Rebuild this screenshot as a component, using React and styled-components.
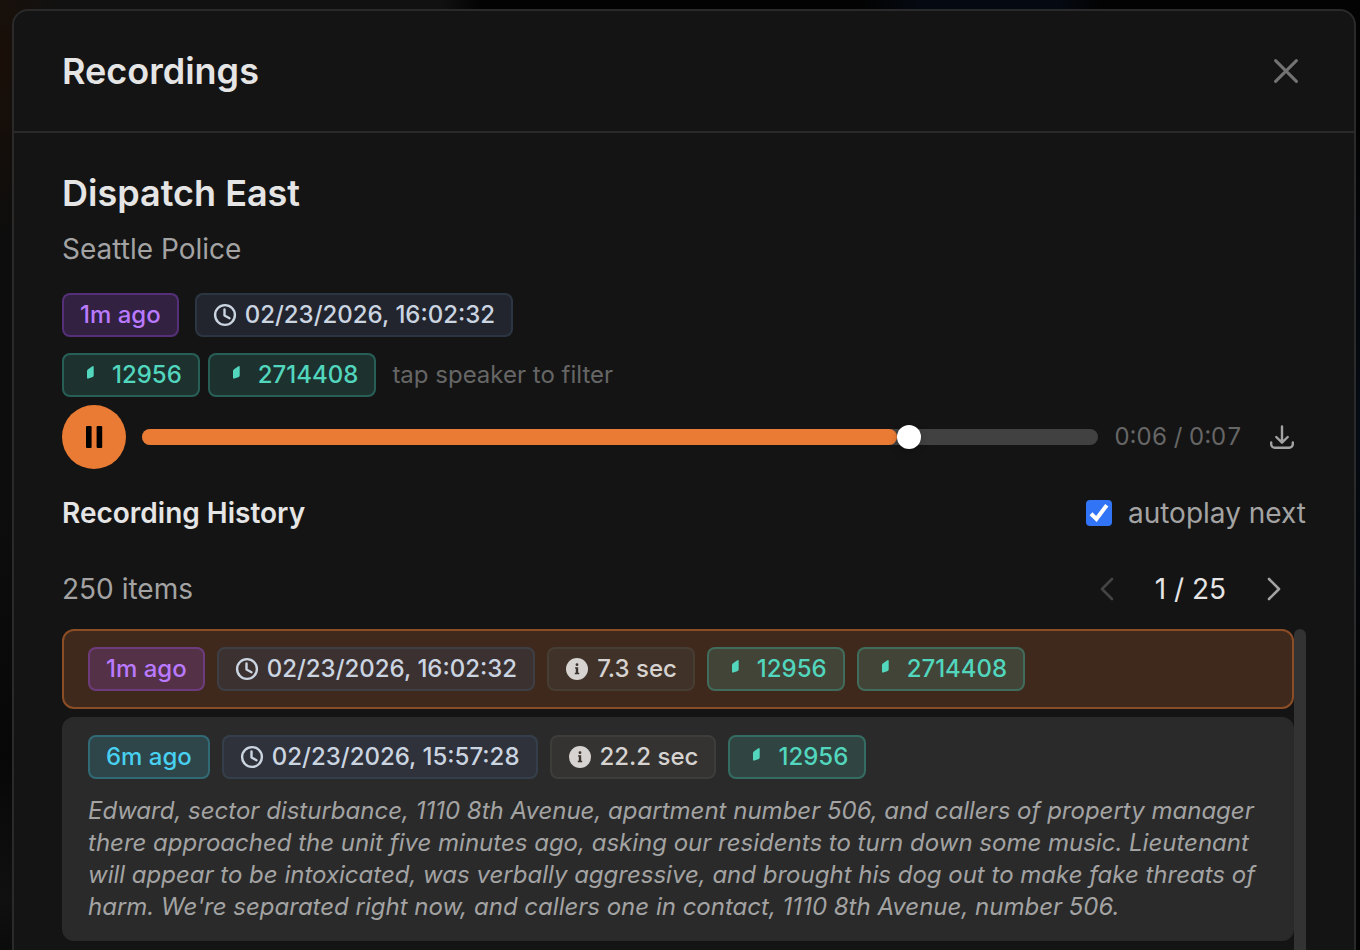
import React, { useState } from "react";
import styled, { createGlobalStyle, css } from "styled-components";

const GlobalStyle = createGlobalStyle`
  *, *::before, *::after { box-sizing: border-box; }
  body {
    margin: 0;
    background: #050505;
    color: #e5e5e5;
    font-family: Inter, "Liberation Sans", sans-serif;
    font-size: 28px;
    line-height: 40px;
  }
  button, input { font: inherit; }
`;

const Backdrop = styled.div`
  height: 100vh;
  overflow: hidden;
  padding: 9px 4px 0 12px;
  background:
    radial-gradient(60px 180px at 0 60px, #1a0f08, transparent),
    linear-gradient(90deg, #111 0, #111 440px, transparent 480px) 0 0 / 100% 30px no-repeat,
    linear-gradient(90deg, transparent 860px, #050911 920px, #050911 1060px, transparent 1100px) 0 0 / 100% 30px no-repeat,
    radial-gradient(40px 300px at 100% 420px, #050b14, transparent),
    linear-gradient(#0d0d0d 0, #0d0d0d 500px, #070707 760px, #101010 900px, #0b0b0b) 0 0 / 40px 100% no-repeat,
    #030303;
`;

const Dialog = styled.section`
  height: 100%;
  display: flex;
  flex-direction: column;
  background: #141414;
  border: 2px solid #2a2a2a;
  border-bottom: 0;
  border-radius: 16px 16px 0 0;
`;

const Header = styled.header`
  flex: none;
  display: flex;
  align-items: center;
  justify-content: space-between;
  padding: 40px 48px;
  border-bottom: 2px solid #2a2a2a;
`;

const Title = styled.h1`
  margin: 0;
  font-size: 36px;
  line-height: 40px;
  font-weight: 600;
`;

const IconButton = styled.button`
  display: flex;
  align-items: center;
  justify-content: center;
  flex: none;
  width: ${(p) => p.$width || 40}px;
  height: 40px;
  padding: 0;
  border: 0;
  background: none;
  color: ${(p) => p.$color || "#a3a3a3"};
`;

const Body = styled.main`
  flex: 1;
  min-height: 0;
  display: flex;
  flex-direction: column;
  padding: 40px 48px 0;
`;

const Channel = styled.h2`
  margin: 0 0 16px;
  font-size: 36px;
  line-height: 40px;
  font-weight: 600;
`;

const Agency = styled.p`
  margin: 0 0 24px;
  color: #a3a3a3;
`;

const TagRow = styled.div`
  display: flex;
  align-items: center;
  gap: ${(p) => p.$gap}px;
  margin-bottom: ${(p) => p.$after || 0}px;
`;

const tones = {
  purple: ["#b97aff", "rgba(168, 85, 247, 0.2)", "rgba(168, 85, 247, 0.3)"],
  cyan: ["#48d0f0", "rgba(72, 208, 240, 0.17)", "rgba(56, 190, 220, 0.3)"],
  slate: ["#cbd5e1", "rgba(55, 62, 82, 0.4)", "rgba(71, 95, 115, 0.3)"],
  stone: ["#d6d3d1", "rgba(68, 64, 60, 0.4)", "rgba(87, 87, 78, 0.3)"],
  teal: ["#52d6be", "rgba(82, 214, 190, 0.16)", "rgba(62, 200, 175, 0.3)"],
};

const tagStyle = css`
  display: inline-flex;
  align-items: center;
  gap: 8px;
  flex: none;
  padding: 4px 16px;
  border: 2px solid ${(p) => tones[p.$tone][2]};
  border-radius: 8px;
  background: ${(p) => tones[p.$tone][1]};
  color: ${(p) => tones[p.$tone][0]};
  font-size: 24px;
  line-height: 32px;
  font-weight: 500;
  white-space: nowrap;
`;

const Tag = styled.span`${tagStyle}`;
const SpeakerTag = styled.button`${tagStyle}`;

const Hint = styled.span`
  margin-left: 8px;
  color: #666;
  font-size: 24px;
  line-height: 32px;
`;

const Player = styled.div`
  display: flex;
  align-items: center;
  gap: 16px;
  margin-bottom: 24px;
`;

const PlayButton = styled.button`
  display: flex;
  align-items: center;
  justify-content: center;
  flex: none;
  width: 64px;
  height: 64px;
  padding: 0;
  border: 0;
  border-radius: 50%;
  background: #ea7b34;
  color: #000;
`;

const Seek = styled.div`
  flex: 1;
  display: grid;
  align-items: center;
  & > * { grid-area: 1 / 1; }
`;

const Track = styled.div`
  height: 16px;
  border-radius: 8px;
  background: #414141;
`;

const Fill = styled.div`
  height: 16px;
  border-radius: 8px;
  background: #ea7b34;
`;

const Slider = styled.input`
  appearance: none;
  width: 100%;
  height: 24px;
  margin: 0;
  background: transparent;
  &::-webkit-slider-thumb {
    appearance: none;
    width: 24px;
    height: 24px;
    border: 0;
    border-radius: 50%;
    background: #fff;
    box-shadow: 0 4px 8px rgba(0, 0, 0, 0.2);
  }
`;

const Time = styled.span`
  color: #666;
  font-size: 24px;
  line-height: 32px;
  font-variant-numeric: tabular-nums;
`;

const SectionBar = styled.div`
  display: flex;
  align-items: center;
  justify-content: space-between;
  margin-bottom: 24px;
`;

const SectionTitle = styled.h3`
  margin: 0;
  font-size: 28px;
  line-height: 40px;
  font-weight: 600;
`;

const Autoplay = styled.label`
  display: flex;
  align-items: center;
  gap: 16px;
  color: #a3a3a3;
`;

const CheckBox = styled.span`
  display: grid;
  & > * { grid-area: 1 / 1; }
  svg { pointer-events: none; }
  input:not(:checked) + svg { display: none; }
`;

const CheckInput = styled.input`
  appearance: none;
  width: 26px;
  height: 26px;
  margin: 0;
  border-radius: 4px;
  background: #555;
  &:checked { background: #3274f6; }
`;

const PagerBar = styled.div`
  display: flex;
  align-items: center;
  justify-content: space-between;
  height: 64px;
  margin-bottom: 8px;
  color: #a3a3a3;
`;

const Pager = styled.nav`
  display: flex;
  align-items: center;
  gap: 16px;
  color: #e5e5e5;
`;

const ListArea = styled.div`
  flex: 1;
  min-height: 0;
  display: flex;
  overflow: hidden;
`;

const List = styled.ul`
  flex: 1;
  display: flex;
  flex-direction: column;
  gap: 8px;
  margin: 0;
  padding: 0;
  list-style: none;
`;

const Item = styled.li`
  flex: none;
  padding: 16px 24px;
  border: 2px solid ${(p) => (p.$active ? "#8b4d25" : "#2a2a2a")};
  border-radius: 12px;
  background: ${(p) => (p.$active ? "#3f291c" : "#2a2a2a")};
`;

const Transcript = styled.p`
  margin: 16px 0 0;
  color: #a3a3a3;
  font-size: 24px;
  line-height: 32px;
  font-style: italic;
  font-optical-sizing: none;
`;

const ScrollBar = styled.div`
  flex: none;
  width: 12px;
  border-radius: 6px 6px 0 0;
  background: #333;
`;

const ClockIcon = () => (
  <svg width="24" height="24" viewBox="0 0 24 24" fill="none" stroke="currentColor" strokeWidth="2.4" strokeLinecap="round" strokeLinejoin="round" aria-hidden="true">
    <circle cx="12" cy="12" r="9.9" />
    <path d="M11.5 6.5v6l5 2.7" />
  </svg>
);

const InfoIcon = () => (
  <svg width="24" height="24" viewBox="0 0 24 24" aria-hidden="true">
    <circle cx="12" cy="12" r="11" fill="currentColor" />
    <g fill="#3b332e">
      <circle cx="12" cy="7.7" r="1.4" />
      <path d="M10 10.2h3.2v5.6h1v1.4h-4.4v-1.4h1v-4.2h-.8z" />
    </g>
  </svg>
);

const SpeakerIcon = () => (
  <svg width="24" height="24" viewBox="0 0 24 24" fill="currentColor" aria-hidden="true">
    <path d="M7 8.2Q7 7.2 7.8 6.6L12 3.4Q13.7 2.4 13.7 4V12.6Q13.7 13.6 12.8 13.9L8.4 15.6Q7 16 7 14.6z" />
  </svg>
);

const CloseIcon = () => (
  <svg width="24" height="24" viewBox="0 0 24 24" stroke="currentColor" strokeWidth="3" strokeLinecap="round" aria-hidden="true">
    <path d="m1.6 1.6 20.8 20.8M22.4 1.6 1.6 22.4" />
  </svg>
);

const PauseIcon = () => (
  <svg width="24" height="24" viewBox="0 0 24 24" fill="currentColor" aria-hidden="true">
    <rect x="4" y="1" width="5.6" height="22" rx="1" />
    <rect x="14.6" y="1" width="5.6" height="22" rx="1" />
  </svg>
);

const DownloadIcon = () => (
  <svg width="24" height="24" viewBox="0 0 24 24" fill="none" stroke="currentColor" strokeWidth="2.4" strokeLinecap="round" strokeLinejoin="round" aria-hidden="true">
    <path d="M12 1.4v16M6.3 12l5.7 5.7 5.7-5.7M1.2 17.4v1.8A3.6 3.6 0 0 0 4.8 22.8h14.4a3.6 3.6 0 0 0 3.6-3.6v-1.8" />
  </svg>
);

const ChevronIcon = ({ d }) => (
  <svg width="24" height="24" viewBox="0 0 24 24" fill="none" stroke="currentColor" strokeWidth="2.6" strokeLinecap="round" strokeLinejoin="round" aria-hidden="true">
    <path d={d} />
  </svg>
);

const CheckIcon = () => (
  <svg width="26" height="26" viewBox="0 0 26 26" fill="none" stroke="#fff" strokeWidth="4" aria-hidden="true">
    <path d="m5 13.8 5.4 5.2L20.8 5.2" />
  </svg>
);

const recordings = [
  { age: "1m ago", tone: "purple", date: "02/23/2026, 16:02:32", length: "7.3 sec", speakers: ["12956", "2714408"], active: true },
  {
    age: "6m ago",
    tone: "cyan",
    date: "02/23/2026, 15:57:28",
    length: "22.2 sec",
    speakers: ["12956"],
    text: "Edward, sector disturbance, 1110 8th Avenue, apartment number 506, and callers of property manager there approached the unit five minutes ago, asking our residents to turn down some music. Lieutenant will appear to be intoxicated, was verbally aggressive, and brought his dog out to make fake threats of harm. We're separated right now, and callers one in contact, 1110 8th Avenue, number 506.",
  },
];

const Speaker = ({ id }) => (
  <SpeakerTag type="button" $tone="teal">
    <SpeakerIcon />
    {id}
  </SpeakerTag>
);

const Recording = ({ item }) => (
  <Item $active={item.active}>
    <TagRow $gap={12}>
      <Tag $tone={item.tone}>{item.age}</Tag>
      <Tag $tone="slate"><ClockIcon />{item.date}</Tag>
      <Tag $tone="stone"><InfoIcon />{item.length}</Tag>
      {item.speakers.map((id) => <Speaker key={id} id={id} />)}
    </TagRow>
    {item.text && <Transcript>{item.text}</Transcript>}
  </Item>
);

export default function App() {
  const [position, setPosition] = useState(81);
  const [autoplay, setAutoplay] = useState(true);
  const current = recordings[0];

  return (
    <>
      <GlobalStyle />
      <Backdrop>
        <Dialog role="dialog" aria-labelledby="dialog-title">
          <Header>
            <Title id="dialog-title">Recordings</Title>
            <IconButton type="button" aria-label="Close" $color="#737373"><CloseIcon /></IconButton>
          </Header>
          <Body>
            <Channel>Dispatch East</Channel>
            <Agency>Seattle Police</Agency>
            <TagRow $gap={16} $after={16}>
              <Tag $tone="purple">{current.age}</Tag>
              <Tag $tone="slate"><ClockIcon />{current.date}</Tag>
            </TagRow>
            <TagRow $gap={8} $after={8}>
              {current.speakers.map((id) => <Speaker key={id} id={id} />)}
              <Hint>tap speaker to filter</Hint>
            </TagRow>
            <Player>
              <PlayButton type="button" aria-label="Pause"><PauseIcon /></PlayButton>
              <Seek>
                <Track />
                <Fill style={{ width: `calc((100% - 24px) * ${position / 100})` }} />
                <Slider
                  type="range"
                  aria-label="Seek"
                  min="0"
                  max="100"
                  value={position}
                  onChange={(e) => setPosition(Number(e.target.value))}
                />
              </Seek>
              <Time>0:06 / 0:07</Time>
              <IconButton type="button" aria-label="Download" $width={48}><DownloadIcon /></IconButton>
            </Player>
            <SectionBar>
              <SectionTitle>Recording History</SectionTitle>
              <Autoplay>
                <CheckBox>
                  <CheckInput type="checkbox" checked={autoplay} onChange={(e) => setAutoplay(e.target.checked)} />
                  <CheckIcon />
                </CheckBox>
                autoplay next
              </Autoplay>
            </SectionBar>
            <PagerBar>
              <span>250 items</span>
              <Pager aria-label="Pages">
                <IconButton type="button" aria-label="Previous page" $width={64} $color="#444"><ChevronIcon d="M17 2 7 12l10 10" /></IconButton>
                <span>1 / 25</span>
                <IconButton type="button" aria-label="Next page" $width={64}><ChevronIcon d="M7 2l10 10L7 22" /></IconButton>
              </Pager>
            </PagerBar>
            <ListArea>
              <List>
                {recordings.map((item) => <Recording key={item.date} item={item} />)}
              </List>
              <ScrollBar />
            </ListArea>
          </Body>
        </Dialog>
      </Backdrop>
    </>
  );
}
